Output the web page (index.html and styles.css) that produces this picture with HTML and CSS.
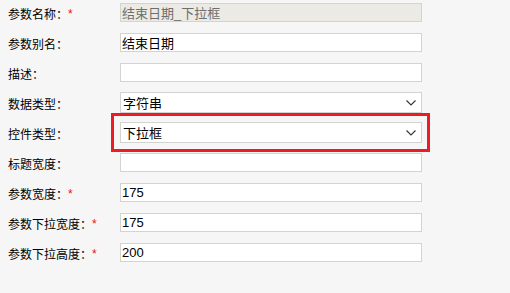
FILE: index.html
```html
<!DOCTYPE html>
<html lang="zh">
<head>
<meta charset="utf-8">
<title>参数设置</title>
<link rel="stylesheet" href="styles.css">
</head>
<body>
<div class="form">
  <div class="label">参数名称：<span class="req">*</span></div>
  <div class="field"><input class="input disabled" type="text" value="结束日期_下拉框" disabled></div>

  <div class="label">参数别名：</div>
  <div class="field"><input class="input" type="text" value="结束日期"></div>

  <div class="label">描述：</div>
  <div class="field"><input class="input" type="text" value=""></div>

  <div class="label">数据类型：</div>
  <div class="field">
    <div class="select"><span>字符串</span>
      <svg class="chev" width="10" height="6" viewBox="0 0 10 6"><polyline points="0.5,0.5 5,5 9.5,0.5" fill="none" stroke="#333" stroke-width="1.1"/></svg>
    </div>
  </div>

  <div class="label">控件类型：</div>
  <div class="field">
    <div class="select highlight"><span>下拉框</span>
      <svg class="chev" width="10" height="6" viewBox="0 0 10 6"><polyline points="0.5,0.5 5,5 9.5,0.5" fill="none" stroke="#333" stroke-width="1.1"/></svg>
    </div>
  </div>

  <div class="label">标题宽度：</div>
  <div class="field"><input class="input" type="text" value=""></div>

  <div class="label">参数宽度：<span class="req">*</span></div>
  <div class="field"><input class="input" type="text" value="175"></div>

  <div class="label">参数下拉宽度：<span class="req">*</span></div>
  <div class="field"><input class="input" type="text" value="175"></div>

  <div class="label">参数下拉高度：<span class="req">*</span></div>
  <div class="field"><input class="input" type="text" value="200"></div>
</div>
</body>
</html>
```
FILE: styles.css
```css
html, body {
  margin: 0;
  background: #f6f6f6;
}
body {
  font-family: "Noto Sans CJK SC", "Liberation Sans", sans-serif;
}
.form {
  display: grid;
  grid-template-columns: 112px 302px;
  grid-auto-rows: 30px;
  padding: 3px 0 0 8px;
}
.label {
  height: 19px;
  line-height: 21px;
  font-size: 12px;
  color: #000;
  white-space: nowrap;
}
.req {
  color: #f01010;
  font-family: "Liberation Sans", sans-serif;
  font-size: 12px;
  position: relative;
  top: -1px;
}
.field {
  position: relative;
}
.input {
  display: block;
  box-sizing: border-box;
  width: 302px;
  height: 19px;
  margin: 0;
  padding: 0 1px;
  border: 1px solid #d3d3cf;
  background: #fff;
  font-family: "Liberation Sans", "Noto Sans CJK SC", sans-serif;
  font-size: 13px;
  line-height: 17px;
  color: #000;
  outline: none;
}
.input.disabled {
  background: #ebeae4;
  color: #6e6e6e;
  -webkit-text-fill-color: #6e6e6e;
  opacity: 1;
}
.select {
  box-sizing: border-box;
  width: 302px;
  height: 21px;
  margin-top: -1px;
  border: 1px solid #d3d3cf;
  background: #fff;
  display: flex;
  align-items: center;
  justify-content: space-between;
  padding: 0 5px 0 2px;
  font-family: "Liberation Sans", "Noto Sans CJK SC", sans-serif;
  font-size: 13px;
  color: #000;
  position: relative;
}
.chev {
  display: block;
}
.highlight::after {
  content: "";
  position: absolute;
  left: -10px;
  top: -10px;
  right: -9px;
  bottom: -10px;
  border: 3px solid #ec1c24;
  pointer-events: none;
}
```
